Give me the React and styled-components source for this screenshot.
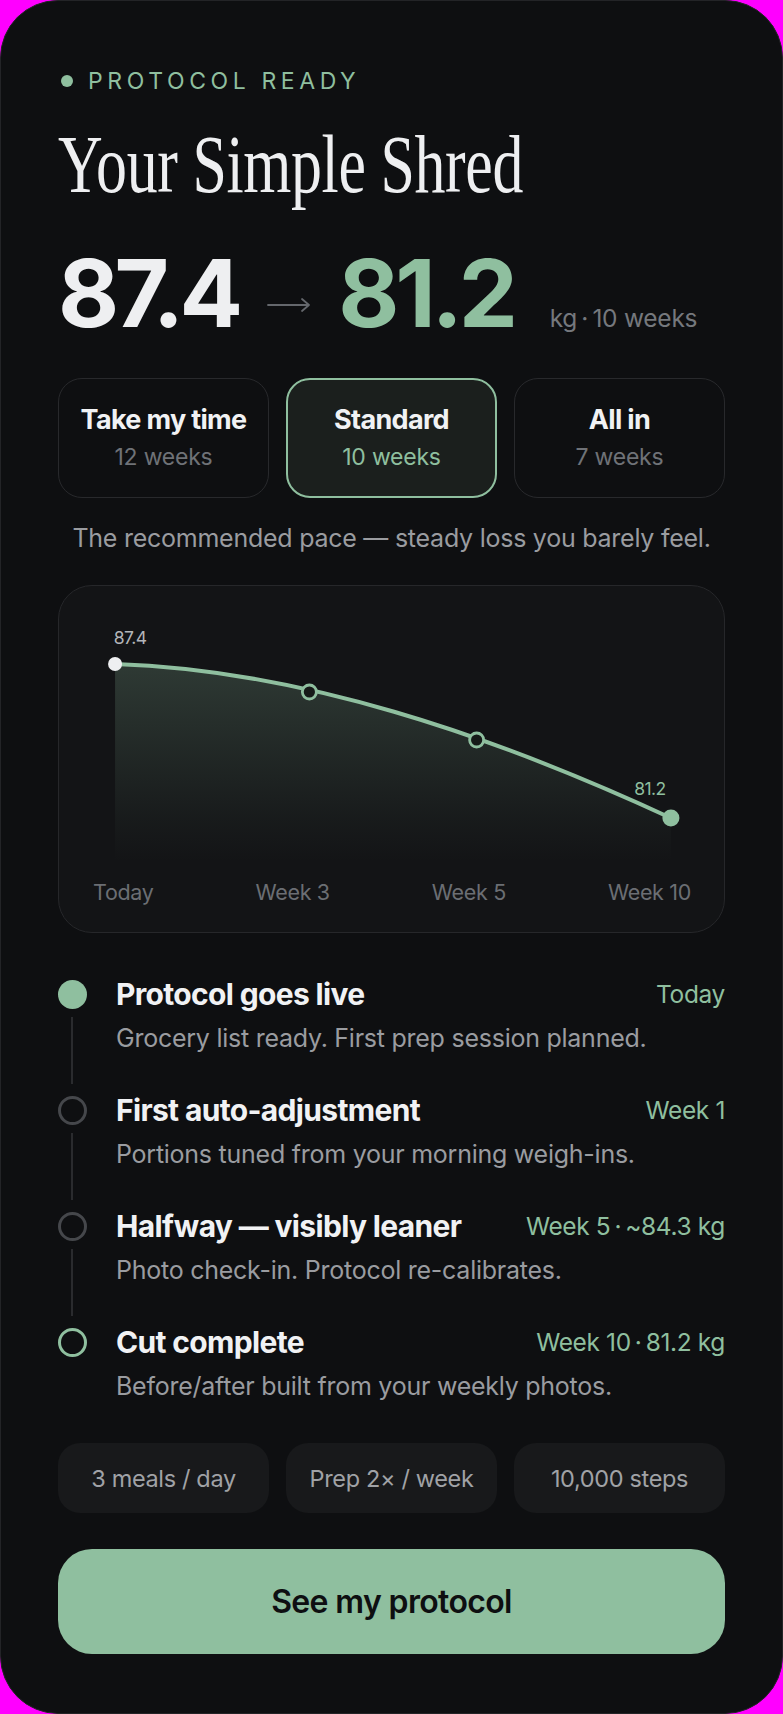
import React from "react";
import styled, { createGlobalStyle } from "styled-components";

const GREEN = "#8fbf9f";
const SANS = `Inter, "Noto Sans", "Liberation Sans", sans-serif`;
const THIN = "\u2009";

const Global = createGlobalStyle`
  html, body { margin: 0; padding: 0; background: #ff00ff; }
  body { font-family: ${SANS}; -webkit-font-smoothing: antialiased; }
  * { box-sizing: border-box; }
`;

const Screen = styled.div`
  min-height: 100vh;
  background: #0e0f11;
  border: 1px solid #232427;
  border-radius: 58px;
  padding: 68px 57px 57px;
  display: flex;
  flex-direction: column;
  color: #eeeff1;
  overflow: hidden;
`;

const Eyebrow = styled.div`
  display: flex;
  align-items: center;
  gap: 15px;
  height: 24px;
  color: ${GREEN};
  font-size: 23px;
  letter-spacing: 0.2em;
  font-weight: 400;
`;

const Dot = styled.span`
  width: 12px;
  height: 12px;
  border-radius: 50%;
  background: ${GREEN};
  margin-left: 3px;
`;

const Title = styled.h1`
  margin: 30px 0 0;
  font-family: "Liberation Serif", "Times New Roman", serif;
  font-weight: 400;
  font-size: 83px;
  line-height: 83px;
  height: 83px;
  letter-spacing: -0.5px;
  white-space: nowrap;
  transform: scaleX(0.745);
  transform-origin: left center;
  color: #eeeff1;
`;

const Numbers = styled.div`
  margin-top: 40px;
  display: flex;
  align-items: baseline;
  height: 95px;
  line-height: 95px;
`;

const Big = styled.span`
  font-size: 94px;
  font-weight: 700;
  letter-spacing: ${(p) => (p.$accent ? "-0.045em" : "-0.05em")};
  color: ${(p) => (p.$accent ? GREEN : "#eeeff1")};
`;

const ArrowIcon = styled.svg`
  width: 44px;
  height: 16px;
  margin: 0 27px 0 29px;
  align-self: center;
  position: relative;
  top: 11px;
  flex: none;
`;

const Unit = styled.span`
  margin-left: 36px;
  font-size: 24.5px;
  color: #75787d;
  letter-spacing: -0.01em;
  white-space: nowrap;
`;

const PaceRow = styled.div`
  margin-top: 37px;
  display: grid;
  grid-template-columns: repeat(3, 1fr);
  gap: 17px;
`;

const PaceCard = styled.div`
  height: 120px;
  border-radius: 24px;
  border: ${(p) => (p.$active ? `2px solid ${GREEN}` : "1.5px solid #28292c")};
  background: ${(p) => (p.$active ? "#1b1f1d" : "transparent")};
  display: flex;
  flex-direction: column;
  align-items: center;
  justify-content: center;
  gap: 8px;
`;

const PaceName = styled.div`
  font-size: 27px;
  line-height: 30px;
  font-weight: 700;
  letter-spacing: -0.025em;
  color: #f1f2f4;
`;

const PaceWeeks = styled.div`
  font-size: 23px;
  line-height: 28px;
  letter-spacing: -0.01em;
  color: ${(p) => (p.$active ? GREEN : "#6f7277")};
`;

const PaceNote = styled.p`
  margin: 25px 0 0;
  text-align: center;
  font-size: 25px;
  line-height: 30px;
  letter-spacing: -0.01em;
  color: #9a9ca0;
  white-space: nowrap;
`;

const ChartCard = styled.div`
  margin-top: 32px;
  height: 348px;
  border-radius: 34px;
  border: 1.5px solid #26272a;
  background: #131416;
  display: flex;
  flex-direction: column;
  overflow: hidden;
`;

const ChartSvg = styled.svg`
  display: block;
  width: 100%;
  height: 293px;
`;

const AxisRow = styled.div`
  display: flex;
  justify-content: space-between;
  padding: 0 33px 0 34px;
  font-size: 21.5px;
  letter-spacing: -0.015em;
  color: #6b6e73;
  line-height: 26px;
`;

const Timeline = styled.div`
  margin-top: 45px;
  display: flex;
  flex-direction: column;
`;

const Item = styled.div`
  display: grid;
  grid-template-columns: 28px 1fr;
  column-gap: 30px;
`;

const Rail = styled.div`
  display: flex;
  flex-direction: column;
  align-items: center;
  padding-top: 2px;
`;

const Marker = styled.span`
  width: 29px;
  height: 29px;
  border-radius: 50%;
  flex: none;
  background: ${(p) => (p.$variant === "done" ? GREEN : "transparent")};
  border: ${(p) =>
    p.$variant === "done"
      ? "none"
      : `3px solid ${p.$variant === "goal" ? GREEN : "#45474b"}`};
`;

const Connector = styled.span`
  flex: 1;
  width: 1.5px;
  background: #2a2b2e;
  margin: 8px 0 10px;
`;

const ItemBody = styled.div`
  padding-bottom: ${(p) => (p.$last ? 0 : 41)}px;
`;

const ItemHead = styled.div`
  display: flex;
  justify-content: space-between;
  align-items: center;
  height: 32px;
`;

const ItemTitle = styled.div`
  font-size: 30px;
  line-height: 32px;
  font-weight: 700;
  letter-spacing: -0.022em;
  color: #f1f2f4;
  white-space: nowrap;
`;

const ItemWhen = styled.div`
  font-size: 24.5px;
  line-height: 32px;
  letter-spacing: -0.015em;
  color: ${GREEN};
  white-space: nowrap;
`;

const ItemDesc = styled.div`
  margin-top: 13px;
  font-size: 25px;
  line-height: 30px;
  letter-spacing: -0.01em;
  color: #9a9ca0;
  white-space: nowrap;
`;

const Chips = styled.div`
  margin-top: 42px;
  display: grid;
  grid-template-columns: repeat(3, 1fr);
  gap: 17px;
`;

const Chip = styled.div`
  height: 70px;
  border-radius: 22px;
  background: #18191b;
  display: flex;
  align-items: center;
  justify-content: center;
  font-size: 23.5px;
  letter-spacing: -0.015em;
  color: #a0a2a6;
`;

const Cta = styled.button`
  margin-top: 36px;
  height: 105px;
  border: none;
  border-radius: 34px;
  background: ${GREEN};
  color: #0e0f11;
  font-family: ${SANS};
  font-size: 32px;
  font-weight: 600;
  letter-spacing: -0.02em;
  cursor: pointer;
`;

const paces = [
  { name: "Take my time", weeks: "12 weeks" },
  { name: "Standard", weeks: "10 weeks", active: true },
  { name: "All in", weeks: "7 weeks" },
];

const steps = [
  {
    title: "Protocol goes live",
    when: "Today",
    desc: "Grocery list ready. First prep session planned.",
    variant: "done",
  },
  {
    title: "First auto-adjustment",
    when: "Week 1",
    desc: "Portions tuned from your morning weigh-ins.",
    variant: "next",
  },
  {
    title: "Halfway — visibly leaner",
    when: `Week 5${THIN}·${THIN}~84.3 kg`,
    desc: "Photo check-in. Protocol re-calibrates.",
    variant: "next",
  },
  {
    title: "Cut complete",
    when: `Week 10${THIN}·${THIN}81.2 kg`,
    desc: "Before/after built from your weekly photos.",
    variant: "goal",
  },
];

function Chart() {
  const line = "M56 78 C 240 84, 430 148, 611 232";
  const area = `${line} L 611 293 L 56 293 Z`;
  return (
    <ChartSvg viewBox="0 0 664 293" preserveAspectRatio="none">
      <defs>
        <linearGradient id="fade" x1="0" y1="0" x2="0" y2="1">
          <stop offset="0" stopColor={GREEN} stopOpacity="0.22" />
          <stop offset="0.72" stopColor={GREEN} stopOpacity="0.04" />
          <stop offset="0.92" stopColor={GREEN} stopOpacity="0" />
        </linearGradient>
      </defs>
      <path d={area} fill="url(#fade)" />
      <path d={line} fill="none" stroke={GREEN} strokeWidth="4" strokeLinecap="round" />
      <circle cx="56" cy="78" r="7" fill="#eeeff1" />
      <circle cx="250" cy="106" r="7" fill="#161a18" stroke={GREEN} strokeWidth="2.8" />
      <circle cx="417" cy="154" r="7" fill="#161a18" stroke={GREEN} strokeWidth="2.8" />
      <circle cx="611" cy="232" r="8.5" fill={GREEN} />
      <text x="71" y="58" textAnchor="middle" fontSize="17.5" fill="#b4b6ba" fontFamily="Inter, sans-serif" letterSpacing="-0.6">87.4</text>
      <text x="590" y="209" textAnchor="middle" fontSize="17.5" fill={GREEN} fontFamily="Inter, sans-serif" letterSpacing="-0.6">81.2</text>
    </ChartSvg>
  );
}

export default function App() {
  return (
    <>
      <Global />
      <Screen>
        <Eyebrow>
          <Dot />
          PROTOCOL READY
        </Eyebrow>
        <Title>Your Simple Shred</Title>
        <Numbers>
          <Big>87.4</Big>
          <ArrowIcon viewBox="0 0 44 16" aria-hidden="true">
            <path d="M1 8 H42 M35 2 L42 8 L35 14" fill="none" stroke="#64676c" strokeWidth="1.8" strokeLinecap="round" strokeLinejoin="round" />
          </ArrowIcon>
          <Big $accent>81.2</Big>
          <Unit>kg{THIN}·{THIN}10 weeks</Unit>
        </Numbers>
        <PaceRow>
          {paces.map((p) => (
            <PaceCard key={p.name} $active={p.active}>
              <PaceName>{p.name}</PaceName>
              <PaceWeeks $active={p.active}>{p.weeks}</PaceWeeks>
            </PaceCard>
          ))}
        </PaceRow>
        <PaceNote>The recommended pace — steady loss you barely feel.</PaceNote>
        <ChartCard>
          <Chart />
          <AxisRow>
            <span>Today</span>
            <span>Week 3</span>
            <span>Week 5</span>
            <span>Week 10</span>
          </AxisRow>
        </ChartCard>
        <Timeline>
          {steps.map((s, i) => {
            const last = i === steps.length - 1;
            return (
              <Item key={s.title}>
                <Rail>
                  <Marker $variant={s.variant} />
                  {!last && <Connector />}
                </Rail>
                <ItemBody $last={last}>
                  <ItemHead>
                    <ItemTitle>{s.title}</ItemTitle>
                    <ItemWhen>{s.when}</ItemWhen>
                  </ItemHead>
                  <ItemDesc>{s.desc}</ItemDesc>
                </ItemBody>
              </Item>
            );
          })}
        </Timeline>
        <Chips>
          <Chip>3 meals / day</Chip>
          <Chip>Prep 2× / week</Chip>
          <Chip>10,000 steps</Chip>
        </Chips>
        <Cta>See my protocol</Cta>
      </Screen>
    </>
  );
}
